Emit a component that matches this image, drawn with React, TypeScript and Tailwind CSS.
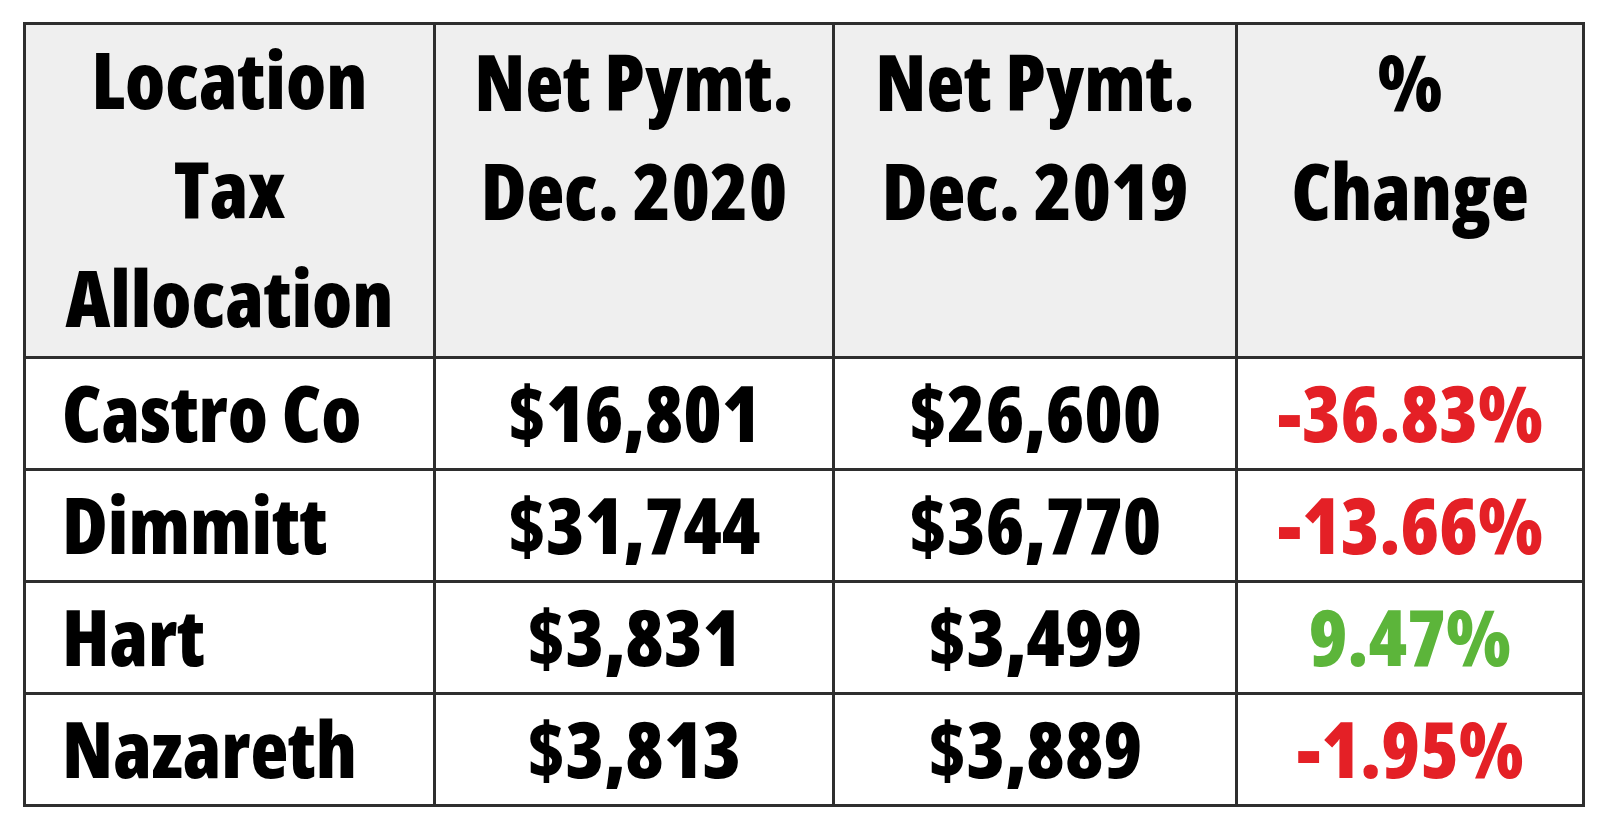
const rows = [
  { place: "Castro Co", dec2020: "$16,801", dec2019: "$26,600", change: "-36.83%", up: false },
  { place: "Dimmitt", dec2020: "$31,744", dec2019: "$36,770", change: "-13.66%", up: false },
  { place: "Hart", dec2020: "$3,831", dec2019: "$3,499", change: "9.47%", up: true },
  { place: "Nazareth", dec2020: "$3,813", dec2019: "$3,889", change: "-1.95%", up: false },
];

export default function App() {
  return (
    <div className="min-h-screen bg-white pl-[23px] pt-[22px] font-['Open_Sans',_'Lato',_sans-serif] font-extrabold text-black">
      <table className="w-[1559px] table-fixed border-collapse border-[3px] border-[#2e2e2e] text-[78px] whitespace-nowrap font-stretch-semi-condensed">
        <colgroup>
          <col className="w-[410px]" />
          <col className="w-[399px]" />
          <col className="w-[403px]" />
          <col className="w-[347px]" />
        </colgroup>
        <thead>
          <tr className="h-[331px] bg-[#efefef] leading-[109px]">
            <th className="border-[3px] border-[#2e2e2e] pb-1 text-center align-middle font-extrabold">
              Location
              <br />
              Tax
              <br />
              Allocation
            </th>
            <th className="border-[3px] border-[#2e2e2e] pb-[109px] text-center align-middle font-extrabold">
              Net Pymt.
              <br />
              Dec. 2020
            </th>
            <th className="border-[3px] border-[#2e2e2e] pb-[109px] text-center align-middle font-extrabold">
              Net Pymt.
              <br />
              Dec. 2019
            </th>
            <th className="border-[3px] border-[#2e2e2e] pb-[109px] text-center align-middle font-extrabold">
              %
              <br />
              Change
            </th>
          </tr>
        </thead>
        <tbody>
          {rows.map((r) => (
            <tr key={r.place} className="h-[112px] leading-none">
              <td className="border-[3px] border-[#2e2e2e] pb-1 pl-[36px] text-left align-middle">{r.place}</td>
              <td className="border-[3px] border-[#2e2e2e] pb-1 text-center align-middle">{r.dec2020}</td>
              <td className="border-[3px] border-[#2e2e2e] pb-1 text-center align-middle">{r.dec2019}</td>
              <td
                className={
                  r.up
                    ? "border-[3px] border-[#2e2e2e] pb-1 text-center align-middle text-[#5cb53a]"
                    : "border-[3px] border-[#2e2e2e] pb-1 text-center align-middle text-[#e42026]"
                }
              >
                {r.change}
              </td>
            </tr>
          ))}
        </tbody>
      </table>
    </div>
  );
}
